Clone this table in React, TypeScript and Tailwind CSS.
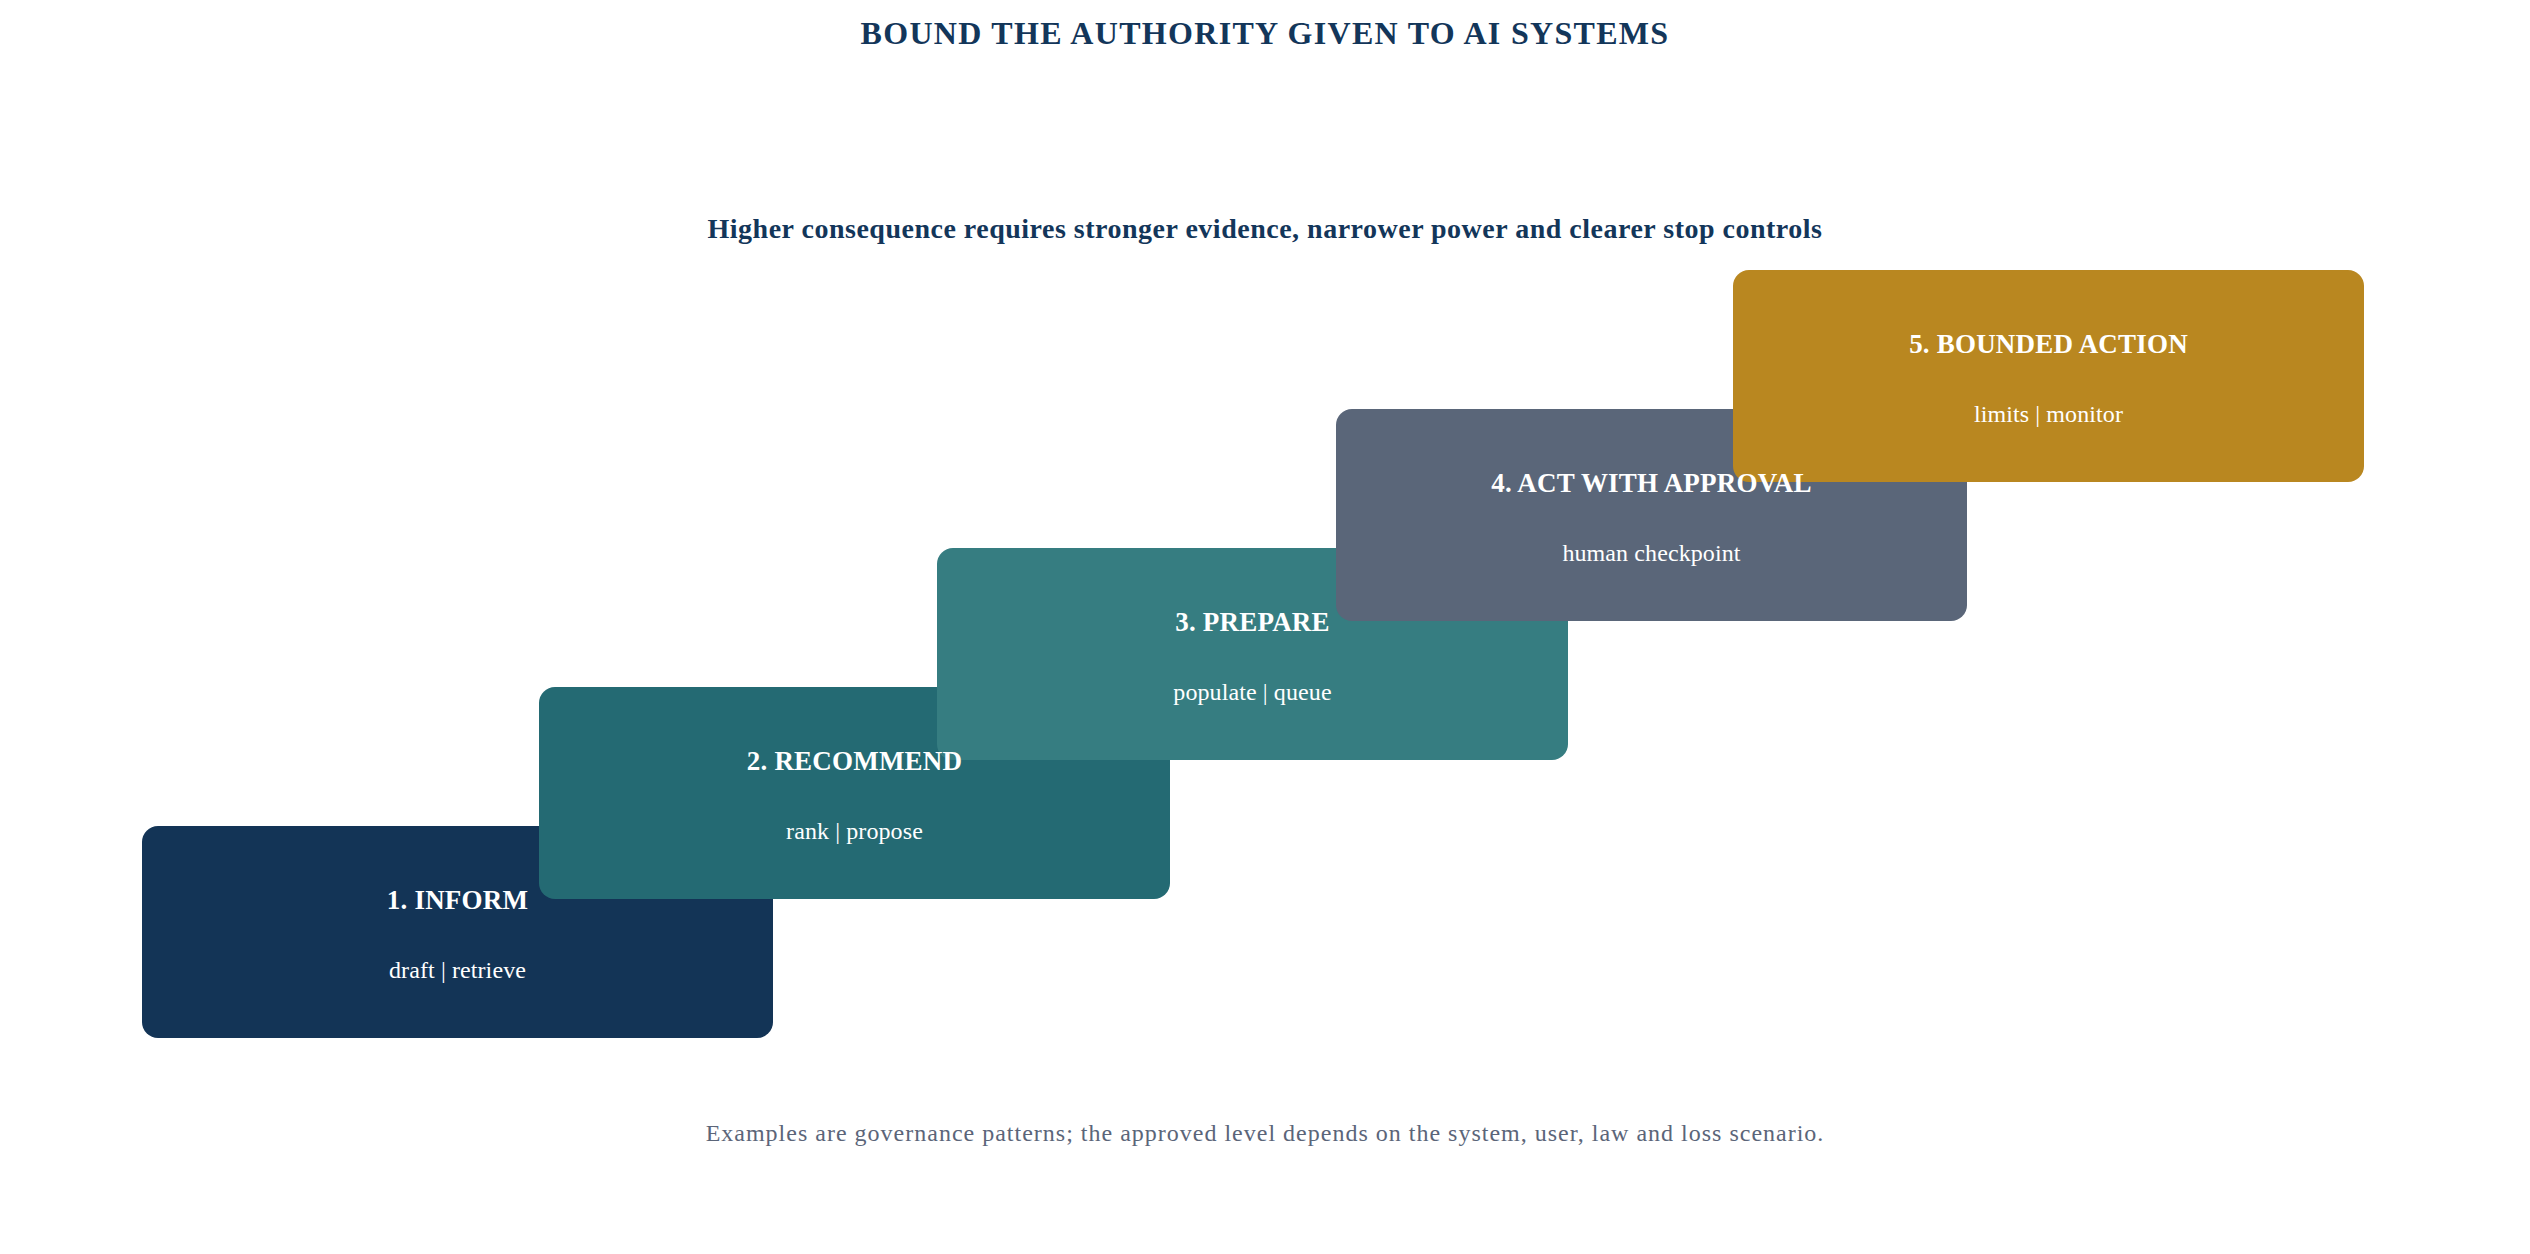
const steps = [
  { label: "1. INFORM", sub: "draft | retrieve", bg: "bg-[#133456]", offset: "ml-0 mt-[556px]" },
  { label: "2. RECOMMEND", sub: "rank | propose", bg: "bg-[#246a73]", offset: "ml-[397px] mt-[417px]" },
  { label: "3. PREPARE", sub: "populate | queue", bg: "bg-[#367d81]", offset: "ml-[795px] mt-[278px]" },
  { label: "4. ACT WITH APPROVAL", sub: "human checkpoint", bg: "bg-[#5a6679]", offset: "ml-[1194px] mt-[139px]" },
  { label: "5. BOUNDED ACTION", sub: "limits | monitor", bg: "bg-[#b98720]", offset: "ml-[1591px] mt-0" },
]

export default function App() {
  return (
    <div className="w-[2530px] h-[1254px] bg-white flex flex-col items-center font-['Liberation_Serif',serif]">
      <h1 className="pt-[17px] text-[32px] leading-none font-bold tracking-[1.3px] text-[#13365a]">
        BOUND THE AUTHORITY GIVEN TO AI SYSTEMS
      </h1>
      <p className="mt-[166px] text-[28px] leading-none font-bold tracking-[0.5px] text-[#13365a]">
        Higher consequence requires stronger evidence, narrower power and clearer stop controls
      </p>

      {/* staircase: all steps share one grid cell, later steps paint over earlier ones */}
      <div className="mt-[27px] self-stretch pl-[142px] grid">
        {steps.map(step => (
          <div
            key={step.label}
            className={`${step.bg} ${step.offset} col-start-1 row-start-1 w-[631px] h-[212px] rounded-[16px] flex flex-col items-center pt-[61px]`}
          >
            <span className="relative z-10 text-[27px] leading-none font-bold tracking-[0.2px] text-white whitespace-nowrap">{step.label}</span>
            <span className="relative z-10 mt-[44px] text-[24px] leading-none tracking-[0.1px] text-white whitespace-nowrap">{step.sub}</span>
          </div>
        ))}
      </div>

      <p className="mt-[83px] text-[24px] leading-none tracking-[1px] text-[#5b6579]">
        Examples are governance patterns; the approved level depends on the system, user, law and loss scenario.
      </p>
    </div>
  )
}
